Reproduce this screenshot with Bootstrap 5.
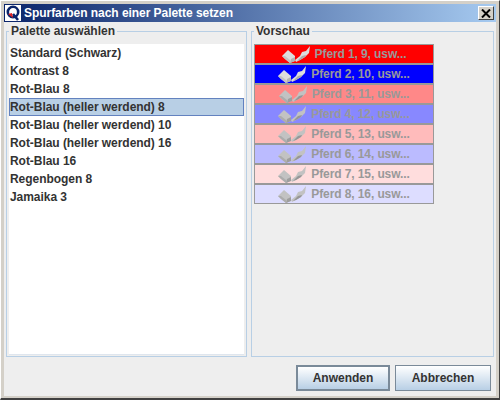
<!DOCTYPE html>
<html lang="de">
<head>
  <meta charset="UTF-8">
  <meta name="viewport" content="width=device-width, initial-scale=1.0">
  <title>Spurfarben nach einer Palette setzen</title>
  <link href="https://cdn.jsdelivr.net/npm/bootstrap@5.3.0/dist/css/bootstrap.min.css" rel="stylesheet">
  <style>
    html, body { width: 500px; height: 400px; overflow: hidden; }
    body { font-family: "Liberation Sans", Arial, sans-serif; font-size: 12px; font-weight: 700; color: #333; background: #d4d0c8; }
    .win { width: 500px; height: 400px; padding: 3px 3px 2px 3px; border-bottom: 2px solid #404040; border-right: 1px solid #404040; border-top: 1px solid #fff; border-left: 1px solid #fff; }
    .win-inner { height: 100%; background: #eee; }
    .titlebar { height: 18px; background: linear-gradient(to right, #0a246a, #a6caf0); color: #fff; font-size: 12px; padding: 0 2px 0 1px; line-height: 18px; gap: 3px; letter-spacing: -.05px; }
    .title-logo { width: 16px; height: 16px; background: #fff; flex: none; }
    .close-x { width: 16px; height: 14px; background: #d4d0c8; border: 1px solid; border-color: #fff #404040 #404040 #fff; line-height: 0; }
    .panes { padding: 2px 2px 0 2px; gap: 4px; height: 335px; }
    fieldset.pane { border: 1px solid #b8cfe5; padding: 5px 2px 1px 2px; margin: 0; min-width: 0; }
    fieldset.pane legend { float: none; width: auto; font-size: 12px; font-weight: 700; line-height: 15px; padding: 0 2px; margin: 0; color: #333; }
    .pane-left { width: 241px; }
    .pane-right { width: 243px; }
    .pal-list { height: 100%; background: #fff; border-bottom: 1px solid #dfe6ee; }
    .pal-row { height: 18px; line-height: 17px; border: 1px solid transparent; white-space: nowrap; letter-spacing: -.05px; }
    .pal-row.sel { background: #b8cfe5; border-color: #6382bf; }
    .swatches { width: 180px; border-top: 1px solid #999; }
    .swatch { height: 20px; border: 1px solid #999; border-top: 0; border-bottom-width: 2px; gap: 5px; color: #999; line-height: 18px; letter-spacing: -.1px; }
    .swatch:last-child { height: 19px; border-bottom-width: 1px; }
    .swatch svg { width: 28px; height: 17px; flex: none; }
    .dim svg { filter: brightness(.88); }
    .btnbar { padding: 8px 5px 0 0; gap: 5px; }
    .dlg-btn { height: 26px; padding: 0; font-size: 12px; font-weight: 700; color: #333; border: 1px solid #7a8a99; border-radius: 0; background: linear-gradient(to bottom, #fff, #b8cfe5); }
    .dlg-btn.def { border-width: 2px; width: 94px; }
    .dlg-btn.other { width: 96px; }
  </style>
</head>

<body>
  <svg width="0" height="0" class="d-none">
    <symbol id="horse" viewBox="0 0 28 17">
      <!-- Sattel links -->
      <path d="M0 10 L6 4 L13 10 L13 15 L8 17 L3 13 Z" fill="#ddd"/>
      <path d="M0 10 L3 13 L8 17 L8 14 L3 10 Z" fill="#c4c4c4"/>
      <path d="M8 17 L13 15 L13 11 L9 13 Z" fill="#b4b4b4"/>
      <!-- Peitsche rechts -->
      <path d="M14 16 L13 14 L18 10 L20 6 L24 5 L28 0 L27 7 L23 11 L18 14 Z" fill="#ddd"/>
      <path d="M15 15 L20 10 L24 9 L23 11 L18 14 Z" fill="#aaa"/>
    </symbol>
  </svg>

  <div class="win">
    <div class="win-inner d-flex flex-column">
      <!-- Titelleiste -->
      <div class="titlebar d-flex align-items-center">
        <svg class="title-logo" viewBox="0 0 16 16">
          <rect width="16" height="16" fill="#fff"/>
          <circle cx="8" cy="7" r="5.2" fill="none" stroke="#0a246a" stroke-width="2.6"/>
          <path d="M8 9 L13 15" stroke="#0a246a" stroke-width="2.6"/>
          <path d="M3 9 L8 13 L7 8 Z" fill="#e02020"/>
        </svg>
        <span class="flex-grow-1">Spurfarben nach einer Palette setzen</span>
        <span class="close-x d-flex align-items-center justify-content-center">
          <svg width="10" height="9" viewBox="0 0 10 9"><path d="M1 0.5 L9 8.5 M9 0.5 L1 8.5" stroke="#000" stroke-width="2"/></svg>
        </span>
      </div>

      <div class="panes d-flex">
        <!-- Palettenliste -->
        <fieldset class="pane pane-left">
          <legend>Palette auswählen</legend>
          <div class="pal-list">
            <div class="pal-row">Standard (Schwarz)</div>
            <div class="pal-row">Kontrast 8</div>
            <div class="pal-row">Rot-Blau 8</div>
            <div class="pal-row sel">Rot-Blau (heller werdend) 8</div>
            <div class="pal-row">Rot-Blau (heller werdend) 10</div>
            <div class="pal-row">Rot-Blau (heller werdend) 16</div>
            <div class="pal-row">Rot-Blau 16</div>
            <div class="pal-row">Regenbogen 8</div>
            <div class="pal-row">Jamaika 3</div>
          </div>
        </fieldset>

        <!-- Vorschau -->
        <fieldset class="pane pane-right">
          <legend>Vorschau</legend>
          <div class="swatches">
            <div class="swatch d-flex align-items-center justify-content-center" style="background:#ff0000"><svg><use href="#horse"/></svg><span>Pferd 1, 9, usw...</span></div>
            <div class="swatch d-flex align-items-center justify-content-center" style="background:#0000ff"><svg><use href="#horse"/></svg><span>Pferd 2, 10, usw...</span></div>
            <div class="swatch dim d-flex align-items-center justify-content-center" style="background:#ff8888"><svg><use href="#horse"/></svg><span>Pferd 3, 11, usw...</span></div>
            <div class="swatch dim d-flex align-items-center justify-content-center" style="background:#8888ff"><svg><use href="#horse"/></svg><span>Pferd 4, 12, usw...</span></div>
            <div class="swatch dim d-flex align-items-center justify-content-center" style="background:#ffbbbb"><svg><use href="#horse"/></svg><span>Pferd 5, 13, usw...</span></div>
            <div class="swatch dim d-flex align-items-center justify-content-center" style="background:#bbbbff"><svg><use href="#horse"/></svg><span>Pferd 6, 14, usw...</span></div>
            <div class="swatch dim d-flex align-items-center justify-content-center" style="background:#ffdddd"><svg><use href="#horse"/></svg><span>Pferd 7, 15, usw...</span></div>
            <div class="swatch dim d-flex align-items-center justify-content-center" style="background:#ddddff"><svg><use href="#horse"/></svg><span>Pferd 8, 16, usw...</span></div>
          </div>
        </fieldset>
      </div>

      <div class="btnbar d-flex justify-content-end">
        <button type="button" class="btn dlg-btn def">Anwenden</button>
        <button type="button" class="btn dlg-btn other">Abbrechen</button>
      </div>
    </div>
  </div>

  <script src="https://cdn.jsdelivr.net/npm/bootstrap@5.3.0/dist/js/bootstrap.bundle.min.js"></script>
</body>
</html>
